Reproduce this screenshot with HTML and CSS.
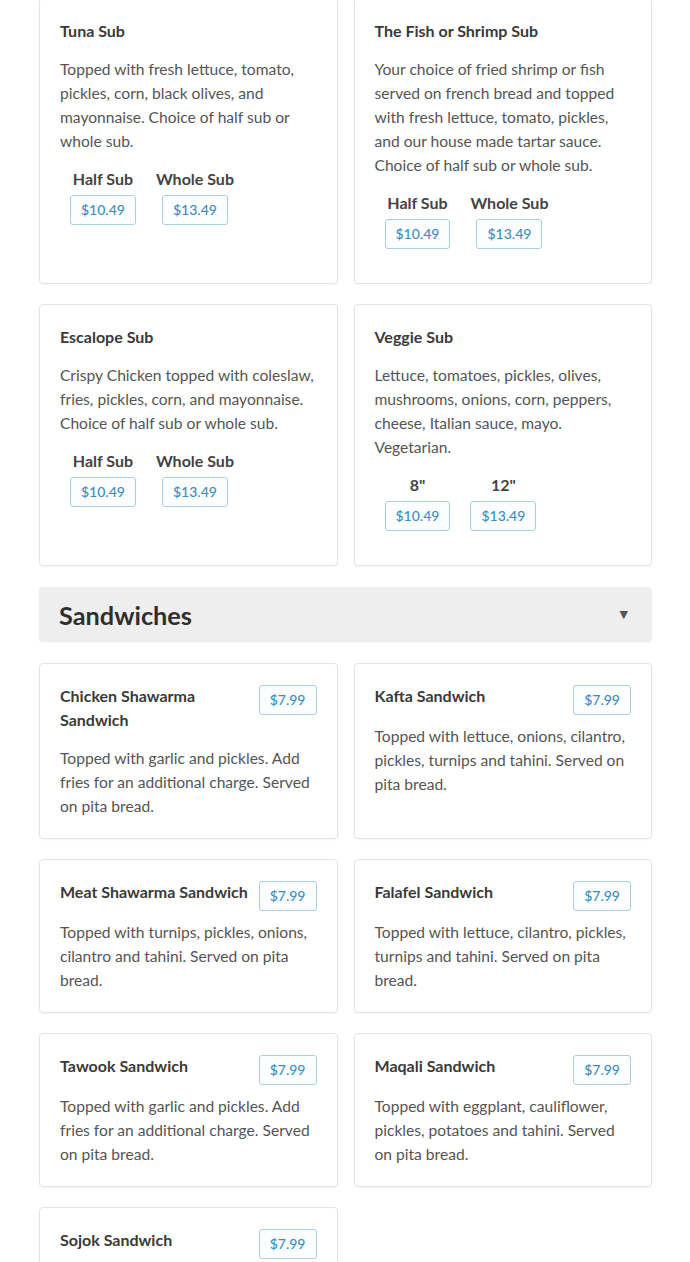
FILE: index.html
```html
<!DOCTYPE html>
<html lang="en">
<head>
<meta charset="utf-8">
<title>Menu</title>
<link rel="stylesheet" href="styles.css">
</head>
<body>
<main class="menu">
  <section class="grid grid-first">
    <article class="card">
      <h3 class="card-title">Tuna Sub</h3>
      <p class="card-desc">Topped with fresh lettuce, tomato, pickles, corn, black olives, and mayonnaise. Choice of half sub or whole sub.</p>
      <div class="sizes">
        <div class="size"><span class="size-label">Half Sub</span><span class="price">$10.49</span></div>
        <div class="size"><span class="size-label">Whole Sub</span><span class="price">$13.49</span></div>
      </div>
    </article>
    <article class="card">
      <h3 class="card-title">The Fish or Shrimp Sub</h3>
      <p class="card-desc">Your choice of fried shrimp or fish served on french bread and topped with fresh lettuce, tomato, pickles, and our house made tartar sauce. Choice of half sub or whole sub.</p>
      <div class="sizes">
        <div class="size"><span class="size-label">Half Sub</span><span class="price">$10.49</span></div>
        <div class="size"><span class="size-label">Whole Sub</span><span class="price">$13.49</span></div>
      </div>
    </article>
    <article class="card">
      <h3 class="card-title">Escalope Sub</h3>
      <p class="card-desc">Crispy Chicken topped with coleslaw, fries, pickles, corn, and mayonnaise. Choice of half sub or whole sub.</p>
      <div class="sizes">
        <div class="size"><span class="size-label">Half Sub</span><span class="price">$10.49</span></div>
        <div class="size"><span class="size-label">Whole Sub</span><span class="price">$13.49</span></div>
      </div>
    </article>
    <article class="card">
      <h3 class="card-title">Veggie Sub</h3>
      <p class="card-desc">Lettuce, tomatoes, pickles, olives, mushrooms, onions, corn, peppers, cheese, Italian sauce, mayo. Vegetarian.</p>
      <div class="sizes">
        <div class="size"><span class="size-label">8"</span><span class="price">$10.49</span></div>
        <div class="size"><span class="size-label">12"</span><span class="price">$13.49</span></div>
      </div>
    </article>
  </section>

  <header class="section-head">
    <h2 class="section-title">Sandwiches</h2>
    <span class="section-arrow">&#9660;</span>
  </header>

  <section class="grid">
    <article class="card card-s">
      <div class="card-head"><h3 class="card-title">Chicken Shawarma Sandwich</h3><span class="price">$7.99</span></div>
      <p class="card-desc">Topped with garlic and pickles. Add fries for an additional charge. Served on pita bread.</p>
    </article>
    <article class="card card-s">
      <div class="card-head"><h3 class="card-title">Kafta Sandwich</h3><span class="price">$7.99</span></div>
      <p class="card-desc">Topped with lettuce, onions, cilantro, pickles, turnips and tahini. Served on pita bread.</p>
    </article>
    <article class="card card-s">
      <div class="card-head"><h3 class="card-title">Meat Shawarma Sandwich</h3><span class="price">$7.99</span></div>
      <p class="card-desc">Topped with turnips, pickles, onions, cilantro and tahini. Served on pita bread.</p>
    </article>
    <article class="card card-s">
      <div class="card-head"><h3 class="card-title">Falafel Sandwich</h3><span class="price">$7.99</span></div>
      <p class="card-desc">Topped with lettuce, cilantro, pickles, turnips and tahini. Served on pita bread.</p>
    </article>
    <article class="card card-s">
      <div class="card-head"><h3 class="card-title">Tawook Sandwich</h3><span class="price">$7.99</span></div>
      <p class="card-desc">Topped with garlic and pickles. Add fries for an additional charge. Served on pita bread.</p>
    </article>
    <article class="card card-s">
      <div class="card-head"><h3 class="card-title">Maqali Sandwich</h3><span class="price">$7.99</span></div>
      <p class="card-desc">Topped with eggplant, cauliflower, pickles, potatoes and tahini. Served on pita bread.</p>
    </article>
    <article class="card card-s">
      <div class="card-head"><h3 class="card-title">Sojok Sandwich</h3><span class="price">$7.99</span></div>
      <p class="card-desc">Topped with garlic and pickles. Served on pita bread.</p>
    </article>
  </section>
</main>
</body>
</html>
```
FILE: styles.css
```css
* { box-sizing: border-box; }
html, body { margin: 0; padding: 0; background: #fff; }
body {
  font-family: Lato, "Open Sans", Arial, sans-serif;
  color: #555;
  overflow: hidden;
}
.menu {
  padding: 0 38px 0 39px;
}
.grid {
  display: grid;
  grid-template-columns: 1fr 1fr;
  column-gap: 16px;
  row-gap: 20px;
}
.grid-first { margin-top: -2px; }
.card {
  background: #fff;
  border: 1px solid #e4e4e4;
  border-radius: 4px;
  padding: 20px;
  box-shadow: 0 1px 2px rgba(0,0,0,0.04);
}
.card-title {
  margin: 0 0 14px;
  font-size: 16px;
  line-height: 24px;
  font-weight: 700;
  color: #3a3a3a;
}
.card-desc {
  margin: 0;
  font-size: 15.6px;
  line-height: 24px;
  color: #555;
}
.sizes {
  display: flex;
  margin: 14px 0 14px;
}
.size {
  display: flex;
  flex-direction: column;
  align-items: center;
  padding: 0 10px;
}
.size-label {
  font-size: 16px;
  line-height: 24px;
  font-weight: 700;
  color: #444;
}
.size .price { margin-top: 4px; }
.price {
  display: inline-block;
  border: 1px solid #a9cfe0;
  border-radius: 3px;
  background: #fbfdff;
  color: #3d8ebf;
  font-size: 14px;
  line-height: 28px;
  height: 30px;
  padding: 0 10px;
  font-weight: 500;
  white-space: nowrap;
}
.card-head {
  display: flex;
  justify-content: space-between;
  align-items: flex-start;
}
.card-head .card-title { padding-right: 8px; }
.card-head .price { margin-top: 1px; margin-bottom: 9px; flex-shrink: 0; }
.section-head {
  display: flex;
  align-items: center;
  justify-content: space-between;
  background: #eeeeee;
  border-radius: 4px;
  height: 55px;
  margin: 21px 0 21px;
  padding: 0 24px 0 20px;
  box-shadow: 0 1px 1px rgba(0,0,0,0.03);
}
.section-title {
  margin: 0;
  font-size: 25.3px;
  font-weight: 700;
  color: #2f2f2f;
}
.section-arrow {
  font-size: 11px;
  color: #555;
  font-family: "DejaVu Sans", sans-serif;
}
```
